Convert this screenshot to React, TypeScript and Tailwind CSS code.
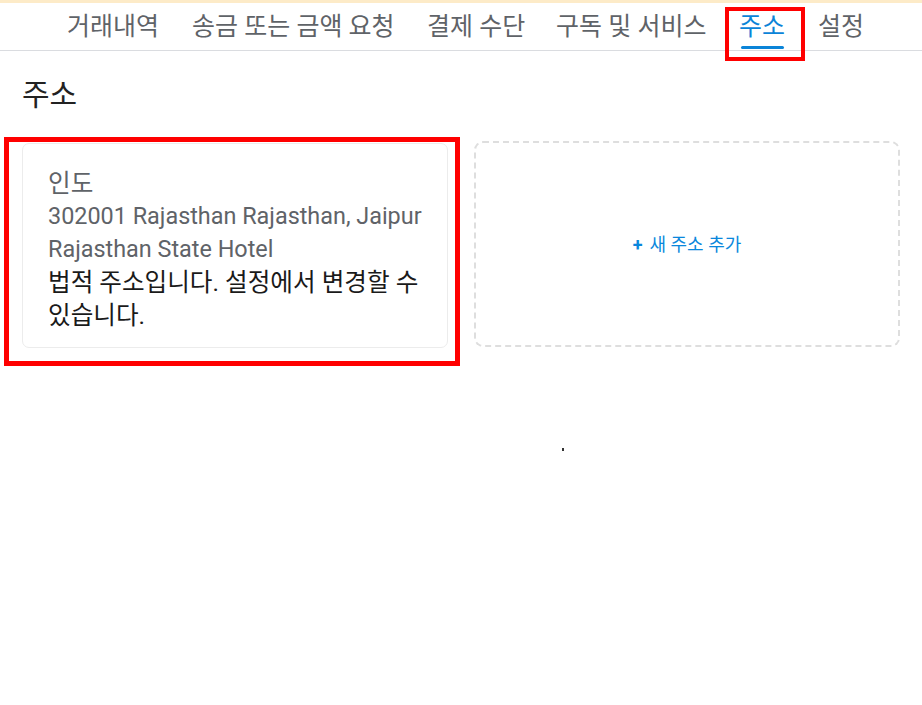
import React from 'react';

// tab start positions taken from the layout: each tab gets a fixed slot
const tabs = [
  { label: '거래내역', w: 'w-[125px]' },
  { label: '송금 또는 금액 요청', w: 'w-[235px]' },
  { label: '결제 수단', w: 'w-[129px]' },
  { label: '구독 및 서비스', w: 'w-[183px]' },
  { label: '주소', w: 'w-[79px]', active: true },
  { label: '설정', w: 'w-[60px]' },
];

const App: React.FC = () => {
  return (
    <div className="relative min-h-[705px] w-full bg-white font-['Roboto','Noto_Sans_CJK_KR',sans-serif]">
      <div className="h-[3px] bg-[#fdebc8]" />

      {/* tab bar */}
      <nav className="flex h-[48px] items-center border-b border-[#dadce0] pl-[67px] text-[25px] text-[#5f6368]">
        {tabs.map((t) => (
          <div key={t.label} className={`flex h-full items-center ${t.w}`}>
            <span className={`relative flex h-full items-center whitespace-nowrap ${t.active ? 'text-[#0b84d8]' : ''}`}>
              {t.label}
              {t.active && (
                <span className="absolute bottom-[1px] left-[2px] right-[1px] h-[3px] rounded-full bg-[#0b84d8]" />
              )}
            </span>
          </div>
        ))}
      </nav>

      <div className="px-[22px]">
        <h1 className="pt-[24px] pb-[28px] text-[30px] leading-[40px] text-[#222]">주소</h1>

        <div className="grid grid-cols-2 gap-[26px]">
          <div className="rounded-[7px] border border-[#ececec] px-[25px] pt-[23px] pb-[15px] leading-[33px]">
            <div className="text-[24.6px] text-[#5f6368]">인도</div>
            <div className="text-[23.4px] text-[#5f6368]">302001 Rajasthan Rajasthan, Jaipur</div>
            <div className="text-[23.4px] text-[#5f6368]">Rajasthan State Hotel</div>
            <div className="text-[24.6px] text-[#1a1a1a]">법적 주소입니다. 설정에서 변경할 수 있습니다.</div>
          </div>

          <button className="-mt-[2px] flex h-[206px] items-center justify-center rounded-[9px] border-2 border-dashed border-[#dedede] text-[18px] text-[#0a87dc]">
            <span className="mr-[7px] font-bold">+</span>새 주소 추가
          </button>
        </div>
      </div>

      {/* annotation boxes */}
      <div className="pointer-events-none absolute left-[725px] top-[7px] h-[54px] w-[80px] border-[4px] border-[#ff0000]" />
      <div className="pointer-events-none absolute left-[4px] top-[137px] h-[229px] w-[456px] border-[5px] border-[#ff0000]" />
      <div className="pointer-events-none absolute left-[562px] top-[448px] h-[3px] w-[2px] bg-[#333]" />
    </div>
  );
};

export default App;
